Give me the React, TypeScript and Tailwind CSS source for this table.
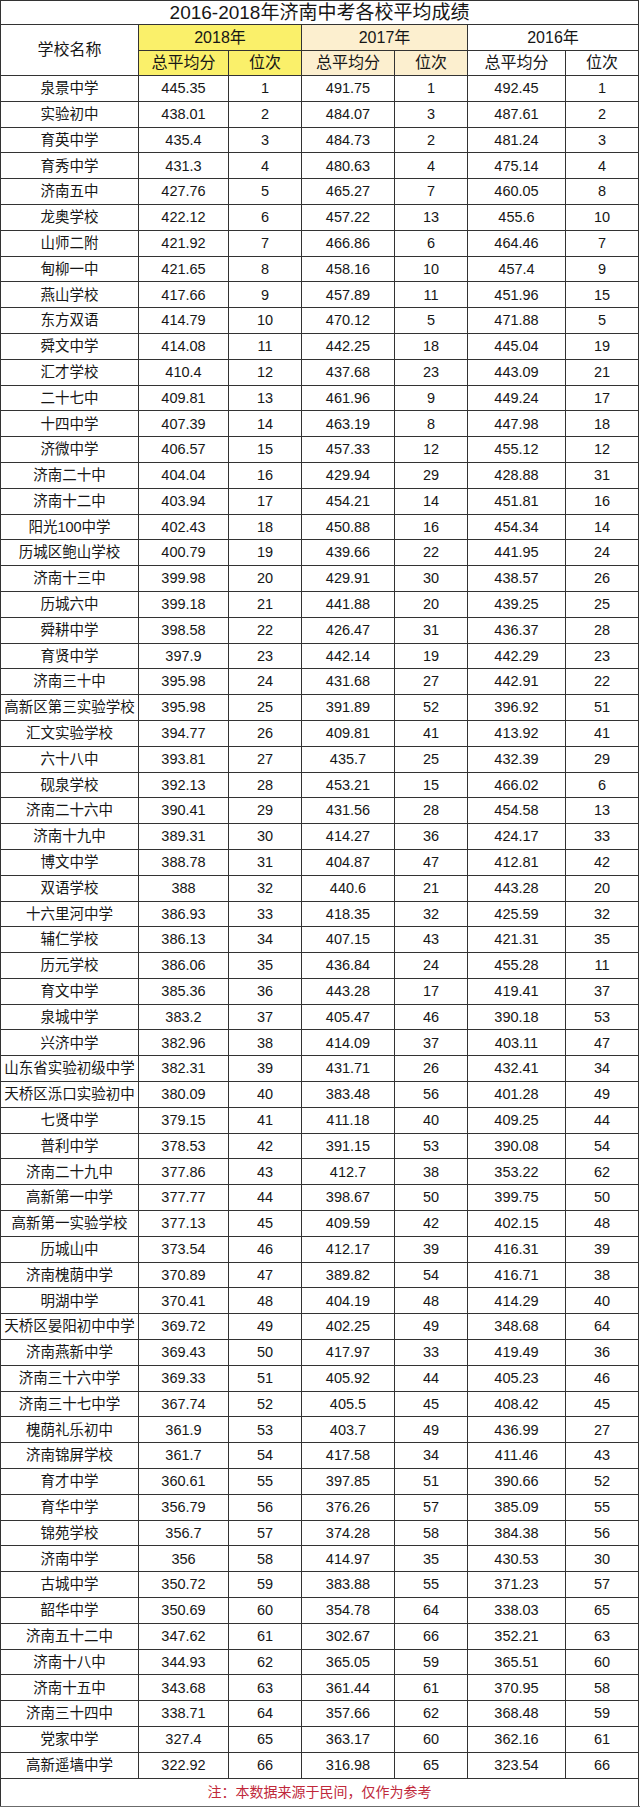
import React from "react";

type Row = [string, string, string, string, string, string, string];

const raw = `泉景中学 445.35 1 491.75 1 492.45 1
实验初中 438.01 2 484.07 3 487.61 2
育英中学 435.4 3 484.73 2 481.24 3
育秀中学 431.3 4 480.63 4 475.14 4
济南五中 427.76 5 465.27 7 460.05 8
龙奥学校 422.12 6 457.22 13 455.6 10
山师二附 421.92 7 466.86 6 464.46 7
甸柳一中 421.65 8 458.16 10 457.4 9
燕山学校 417.66 9 457.89 11 451.96 15
东方双语 414.79 10 470.12 5 471.88 5
舜文中学 414.08 11 442.25 18 445.04 19
汇才学校 410.4 12 437.68 23 443.09 21
二十七中 409.81 13 461.96 9 449.24 17
十四中学 407.39 14 463.19 8 447.98 18
济微中学 406.57 15 457.33 12 455.12 12
济南二十中 404.04 16 429.94 29 428.88 31
济南十二中 403.94 17 454.21 14 451.81 16
阳光100中学 402.43 18 450.88 16 454.34 14
历城区鲍山学校 400.79 19 439.66 22 441.95 24
济南十三中 399.98 20 429.91 30 438.57 26
历城六中 399.18 21 441.88 20 439.25 25
舜耕中学 398.58 22 426.47 31 436.37 28
育贤中学 397.9 23 442.14 19 442.29 23
济南三十中 395.98 24 431.68 27 442.91 22
高新区第三实验学校 395.98 25 391.89 52 396.92 51
汇文实验学校 394.77 26 409.81 41 413.92 41
六十八中 393.81 27 435.7 25 432.39 29
砚泉学校 392.13 28 453.21 15 466.02 6
济南二十六中 390.41 29 431.56 28 454.58 13
济南十九中 389.31 30 414.27 36 424.17 33
博文中学 388.78 31 404.87 47 412.81 42
双语学校 388 32 440.6 21 443.28 20
十六里河中学 386.93 33 418.35 32 425.59 32
辅仁学校 386.13 34 407.15 43 421.31 35
历元学校 386.06 35 436.84 24 455.28 11
育文中学 385.36 36 443.28 17 419.41 37
泉城中学 383.2 37 405.47 46 390.18 53
兴济中学 382.96 38 414.09 37 403.11 47
山东省实验初级中学 382.31 39 431.71 26 432.41 34
天桥区泺口实验初中 380.09 40 383.48 56 401.28 49
七贤中学 379.15 41 411.18 40 409.25 44
普利中学 378.53 42 391.15 53 390.08 54
济南二十九中 377.86 43 412.7 38 353.22 62
高新第一中学 377.77 44 398.67 50 399.75 50
高新第一实验学校 377.13 45 409.59 42 402.15 48
历城山中 373.54 46 412.17 39 416.31 39
济南槐荫中学 370.89 47 389.82 54 416.71 38
明湖中学 370.41 48 404.19 48 414.29 40
天桥区晏阳初中中学 369.72 49 402.25 49 348.68 64
济南燕新中学 369.43 50 417.97 33 419.49 36
济南三十六中学 369.33 51 405.92 44 405.23 46
济南三十七中学 367.74 52 405.5 45 408.42 45
槐荫礼乐初中 361.9 53 403.7 49 436.99 27
济南锦屏学校 361.7 54 417.58 34 411.46 43
育才中学 360.61 55 397.85 51 390.66 52
育华中学 356.79 56 376.26 57 385.09 55
锦苑学校 356.7 57 374.28 58 384.38 56
济南中学 356 58 414.97 35 430.53 30
古城中学 350.72 59 383.88 55 371.23 57
韶华中学 350.69 60 354.78 64 338.03 65
济南五十二中 347.62 61 302.67 66 352.21 63
济南十八中 344.93 62 365.05 59 365.51 60
济南十五中 343.68 63 361.44 61 370.95 58
济南三十四中 338.71 64 357.66 62 368.48 59
党家中学 327.4 65 363.17 60 362.16 61
高新遥墙中学 322.92 66 316.98 65 323.54 66`;

const rows: Row[] = raw.split("\n").map((l) => l.trim().split(/\s+/) as Row);

const grid = "grid grid-cols-[138px_90px_73px_93px_73px_98px_73px]";
const cell = "flex items-center justify-center border-r border-b border-[#333333] text-[#161616]";

export default function App() {
  return (
    <div
      className="w-[640px] h-[1807px] bg-white overflow-hidden"
      style={{ fontFamily: '"Liberation Sans", "Noto Sans CJK SC", sans-serif' }}
    >
      <div className="w-[639px] border-l border-t border-[#333333]">
        <div className="h-[24px] flex items-center justify-center border-r border-b border-[#333333] text-[19px] text-[#161616] leading-none">
          2016-2018年济南中考各校平均成绩
        </div>
        <div className={`${grid} grid-rows-[26px_25px] text-[16px] leading-none`}>
          <div className={`${cell} row-span-2`}>学校名称</div>
          <div className={`${cell} col-span-2 bg-[#faf06a]`}>2018年</div>
          <div className={`${cell} col-span-2 bg-[#fcefcf]`}>2017年</div>
          <div className={`${cell} col-span-2`}>2016年</div>
          <div className={`${cell} bg-[#faf06a]`}>总平均分</div>
          <div className={`${cell} bg-[#faf06a]`}>位次</div>
          <div className={`${cell} bg-[#fcefcf]`}>总平均分</div>
          <div className={`${cell} bg-[#fcefcf]`}>位次</div>
          <div className={cell}>总平均分</div>
          <div className={cell}>位次</div>
        </div>
        {rows.map((r, i) => (
          <div key={i} className={`${grid} h-[25.8px] text-[14.5px] leading-none`}>
            {r.map((v, j) => (
              <div key={j} className={cell}>
                {v}
              </div>
            ))}
          </div>
        ))}
        <div className="h-[27px] flex items-center justify-center border-r border-[#333333] text-[14px] text-[#c0283a] leading-none">
          注：本数据来源于民间，仅作为参考
        </div>
        <div className="h-[2px] -ml-px w-[640px] bg-[#6b6b6b]" />
      </div>
    </div>
  );
}
